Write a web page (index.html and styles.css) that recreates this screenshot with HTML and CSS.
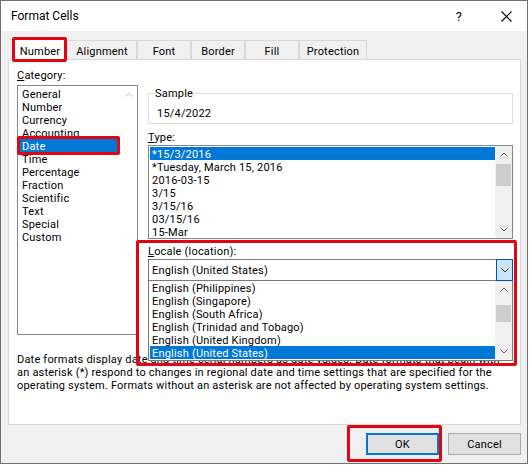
FILE: index.html
```html
<!DOCTYPE html>
<html>
<head>
<meta charset="utf-8">
<title>Format Cells</title>
<link rel="stylesheet" href="styles.css">
</head>
<body>
<div class="window">
  <div class="titlebar">
    <span class="title">Format Cells</span>
    <span class="help">?</span>
    <span class="close"><svg width="11" height="11" viewBox="0 0 11 11"><path d="M0.5 0.5L10.5 10.5M10.5 0.5L0.5 10.5" stroke="#000" stroke-width="1.1" fill="none"/></svg></span>
  </div>
  <div class="content">
    <div class="tabs">
      <div class="tab active">Number</div>
      <div class="tab t-align">Alignment</div>
      <div class="tab t-font">Font</div>
      <div class="tab t-border">Border</div>
      <div class="tab t-fill">Fill</div>
      <div class="tab t-prot">Protection</div>
    </div>
    <div class="panel">
      <div class="columns">
        <div class="category">
          <div class="label"><u>C</u>ategory:</div>
          <div class="listbox cat-list">
            <ul class="items">
              <li>General</li>
              <li>Number</li>
              <li>Currency</li>
              <li>Accounting</li>
              <li class="selected marked">Date</li>
              <li>Time</li>
              <li>Percentage</li>
              <li>Fraction</li>
              <li>Scientific</li>
              <li>Text</li>
              <li>Special</li>
              <li>Custom</li>
            </ul>
            <div class="scrollbar disabled">
              <span class="arrow"><svg width="8" height="5" viewBox="0 0 8 5"><path d="M0.5 4.5L4 1L7.5 4.5" stroke="#c4c4c4" fill="none"/></svg></span>
            </div>
          </div>
        </div>
        <div class="details">
          <fieldset class="sample">
            <legend>Sample</legend>
            <div class="sample-value">15/4/2022</div>
          </fieldset>
          <div class="label type-label"><u>T</u>ype:</div>
          <div class="listbox type-list">
            <ul class="items">
              <li class="selected">*15/3/2016</li>
              <li>*Tuesday, March 15, 2016</li>
              <li>2016-03-15</li>
              <li>3/15</li>
              <li>3/15/16</li>
              <li>03/15/16</li>
              <li>15-Mar</li>
            </ul>
            <div class="scrollbar">
              <span class="arrow"><svg width="8" height="5" viewBox="0 0 8 5"><path d="M0.5 4.5L4 1L7.5 4.5" stroke="#606060" fill="none"/></svg></span>
              <span class="thumb type-thumb"></span>
              <span class="spacer"></span>
              <span class="arrow"><svg width="8" height="5" viewBox="0 0 8 5"><path d="M0.5 0.5L4 4L7.5 0.5" stroke="#606060" fill="none"/></svg></span>
            </div>
          </div>
          <div class="locale">
            <div class="label"><u>L</u>ocale (location):</div>
            <div class="combo">
              <span class="combo-text">English (United States)</span>
              <span class="drop-btn"><svg width="8" height="5" viewBox="0 0 8 5"><path d="M0.5 0.5L4 4L7.5 0.5" stroke="#404040" fill="none"/></svg></span>
              <div class="dropdown">
                <ul class="items">
                  <li>English (Philippines)</li>
                  <li>English (Singapore)</li>
                  <li>English (South Africa)</li>
                  <li>English (Trinidad and Tobago)</li>
                  <li>English (United Kingdom)</li>
                  <li class="selected">English (United States)</li>
                </ul>
                <div class="scrollbar">
                  <span class="arrow"><svg width="8" height="5" viewBox="0 0 8 5"><path d="M0.5 4.5L4 1L7.5 4.5" stroke="#606060" fill="none"/></svg></span>
                  <span class="thumb drop-thumb"></span>
                  <span class="spacer"></span>
                  <span class="arrow"><svg width="8" height="5" viewBox="0 0 8 5"><path d="M0.5 0.5L4 4L7.5 0.5" stroke="#606060" fill="none"/></svg></span>
                </div>
              </div>
            </div>
          </div>
        </div>
      </div>
      <p class="desc">Date formats display date and time serial numbers as date values. Date formats that begin with<br>an asterisk (*) respond to changes in regional date and time settings that are specified for the<br>operating system. Formats without an asterisk are not affected by operating system settings.</p>
    </div>
    <div class="buttons">
      <button class="btn ok">OK</button>
      <button class="btn">Cancel</button>
    </div>
  </div>
</div>
</body>
</html>
```
FILE: styles.css
```css
* {
  box-sizing: border-box;
}

html,
body {
  margin: 0;
  padding: 0;
  background: #ffffff;
}

body {
  font-family: Roboto, "Noto Sans", sans-serif;
  font-size: 11px;
  line-height: 13px;
  letter-spacing: 0.2px;
  color: #000000;
}

.window {
  width: 528px;
  height: 464px;
  border: 1px solid #707070;
  background: #f0f0f0;
  display: flex;
  flex-direction: column;
}

.titlebar {
  flex: none;
  height: 30px;
  background: #ffffff;
  display: flex;
  align-items: center;
  padding: 1px 0 0 10px;
  font-size: 12px;
  letter-spacing: 0;
}

.title {
  flex: 1;
}

.help {
  font-size: 13px;
  margin-right: 39px;
}

.close {
  display: flex;
  margin-right: 15px;
}

.content {
  flex: 1;
  display: flex;
  flex-direction: column;
  padding: 7px 6px 0 7px;
}

/* tabs */
.tabs {
  display: flex;
  align-items: flex-end;
  height: 21px;
  padding-left: 5px;
  position: relative;
  z-index: 2;
}

.tab {
  height: 19px;
  border: 1px solid #d9d9d9;
  border-bottom: none;
  background: #f0f0f0;
  text-align: center;
  padding-top: 4px;
  width: 54px;
}

.tab.active {
  position: relative;
  height: 22px;
  margin-bottom: -1px;
  padding-top: 6px;
  background: #ffffff;
}

.tab.active::after {
  content: "";
  position: absolute;
  left: -2px;
  right: -1px;
  top: -2px;
  bottom: -2px;
  border: 3px solid #e20613;
  border-radius: 2px;
}

.t-align {
  width: 70px;
}

.t-prot {
  width: 68px;
}

/* panel */
.panel {
  flex: none;
  height: 366px;
  background: #ffffff;
  border: 1px solid #d9d9d9;
  padding: 8px 7px 0 8px;
  position: relative;
  z-index: 1;
}

.columns {
  display: grid;
  grid-template-columns: 121px 365px;
  column-gap: 10px;
}

.label {
  height: 13px;
  padding-top: 1px;
}

/* list boxes */
.listbox {
  display: flex;
  border: 1px solid #828790;
  background: #ffffff;
}

.items {
  list-style: none;
  margin: 0;
  flex: 1;
  min-width: 0;
}

.items li {
  height: 13px;
  padding: 1px 0 0 2px;
  white-space: nowrap;
  position: relative;
}

.items li.selected {
  background: #0078d7;
  color: #ffffff;
}

.cat-list {
  margin-top: 4px;
  height: 250px;
}

.cat-list .items {
  padding: 1px 0 0 2px;
}

.items li.marked::after {
  content: "";
  position: absolute;
  left: -3px;
  right: 0;
  top: -3px;
  bottom: -3px;
  border: 3px solid #e20613;
  border-radius: 2px;
}

.scrollbar {
  flex: none;
  width: 17px;
  background: #f0f0f0;
  display: flex;
  flex-direction: column;
}

.scrollbar.disabled {
  background: #ffffff;
}

.arrow {
  flex: none;
  height: 17px;
  display: flex;
  align-items: center;
  justify-content: center;
}

.thumb {
  flex: none;
  margin: 1px 1px 0 1px;
  background: #cdcdcd;
}

.spacer {
  flex: 1;
}

.type-thumb {
  height: 22px;
}

.drop-thumb {
  margin-top: 7px;
  height: 17px;
}

/* sample */
.sample {
  margin: 18px 0 0 0;
  padding: 7px 0 3px 6px;
  border: 1px solid #dcdcdc;
  min-width: 0;
}

.sample legend {
  padding: 1px 1px 0 0;
  line-height: 13px;
}

.sample-value {
  padding-left: 2px;
}

.type-label {
  margin-top: 6px;
}

.type-list {
  margin-top: 2px;
  height: 94px;
}

.type-list .items {
  padding: 1px 0 0 1px;
}

/* locale */
.locale {
  position: relative;
  margin-top: 5px;
}

.locale::after {
  content: "";
  position: absolute;
  left: -12px;
  right: -4px;
  top: -4px;
  height: 120px;
  border: 3px solid #e20613;
  border-radius: 2px;
  z-index: 5;
}

.combo {
  position: relative;
  margin-top: 2px;
  height: 22px;
  border: 1px solid #7a7a7a;
  display: flex;
  align-items: center;
  padding: 1px 0 0 3px;
}

.combo-text {
  flex: 1;
}

.drop-btn {
  position: absolute;
  right: -1px;
  top: -1px;
  width: 17px;
  height: 22px;
  background: #cce4f7;
  border: 1px solid #005499;
  display: flex;
  align-items: center;
  justify-content: center;
}

.dropdown {
  position: absolute;
  left: -1px;
  right: -1px;
  top: 21px;
  height: 80px;
  background: #ffffff;
  border: 1px solid #7a7a7a;
  border-top: none;
  display: flex;
  z-index: 4;
}

.dropdown .items {
  padding: 0 0 0 1px;
}

/* description */
.desc {
  margin: 18px 0 0 0;
  white-space: nowrap;
}

/* buttons */
.buttons {
  display: flex;
  justify-content: flex-end;
  gap: 9px;
  padding-top: 8px;
}

.btn {
  width: 73px;
  height: 22px;
  border: 1px solid #adadad;
  background: #e1e1e1;
  font-family: inherit;
  font-size: 11px;
  letter-spacing: 0.2px;
  color: #000000;
  padding: 1px 0 0 0;
  position: relative;
}

.btn.ok {
  border-color: #0078d7;
  box-shadow: inset 0 0 0 1px #0078d7;
}

.btn.ok::after {
  content: "";
  position: absolute;
  left: -20px;
  right: -4px;
  top: -9px;
  bottom: -8px;
  border: 3px solid #e20613;
  border-radius: 2px;
}
```
